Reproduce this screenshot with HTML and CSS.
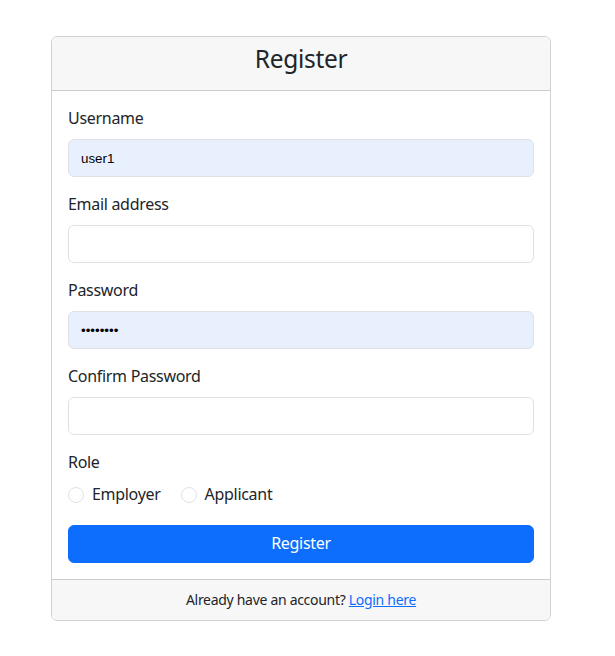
FILE: index.html
```html
<!DOCTYPE html>
<html lang="en">
<head>
<meta charset="utf-8">
<title>Register</title>
<link rel="stylesheet" href="styles.css">
</head>
<body>
<div class="container">
  <div class="card">
    <div class="card-header">
      <h3 class="title">Register</h3>
    </div>
    <div class="card-body">
      <form class="form">
        <div class="field">
          <label class="label" for="username">Username</label>
          <input class="control autofill" id="username" type="text" value="user1">
        </div>
        <div class="field">
          <label class="label" for="email">Email address</label>
          <input class="control" id="email" type="email">
        </div>
        <div class="field">
          <label class="label" for="password">Password</label>
          <input class="control autofill" id="password" type="password" value="password">
        </div>
        <div class="field">
          <label class="label" for="confirm">Confirm Password</label>
          <input class="control" id="confirm" type="password">
        </div>
        <div class="field">
          <div class="label">Role</div>
          <div class="radios">
            <label class="check"><span class="radio"></span><span class="check-text">Employer</span></label>
            <label class="check"><span class="radio"></span><span class="check-text">Applicant</span></label>
          </div>
        </div>
        <button class="btn" type="button">Register</button>
      </form>
    </div>
    <div class="card-footer">
      Already have an account? <a class="link" href="#">Login here</a>
    </div>
  </div>
</div>
</body>
</html>
```

FILE: styles.css
```css
* { box-sizing: border-box; }
html, body { margin: 0; padding: 0; background: #fff; }
body {
  font-family: "Noto Sans", "Open Sans", sans-serif;
  font-size: 16px;
  line-height: 24px;
  letter-spacing: -0.3px;
  color: #212529;
}
.container {
  padding: 36px 51px 0 51px;
}
.card {
  width: 500px;
  border: 1px solid rgba(0,0,0,0.175);
  border-radius: 6px;
  overflow: hidden;
}
.card-header {
  background: #f7f7f7;
  border-bottom: 1px solid rgba(0,0,0,0.175);
  padding: 7px 16px 9px;
  height: 54px;
}
.title {
  margin: 0;
  text-align: center;
  font-weight: 400;
  font-size: 24.5px;
  line-height: 29px;
  color: #212529;
}
.card-body {
  padding: 16px;
}
.form { display: flex; flex-direction: column; margin: 0; }
.field { display: flex; flex-direction: column; margin-bottom: 16px; }
.label {
  display: block;
  margin-top: -1px;
  padding-bottom: 1px;
  margin-bottom: 8px;
  line-height: 24px;
}
.control {
  display: block;
  width: 100%;
  height: 38px;
  padding: 6px 12px;
  border: 1px solid #dee2e6;
  border-radius: 6px;
  background: #fff;
  font-family: "Liberation Sans", Arial, sans-serif;
  font-size: 13.33px;
  letter-spacing: 0;
  color: #000;
  outline: none;
}
.control.autofill { background: #e8f0fe; }
.radios { display: flex; gap: 20px; height: 24px; margin-bottom: 2px; }
.check { display: flex; align-items: center; gap: 8px; }
.check-text { line-height: 22px; padding-bottom: 2px; }
.radio {
  width: 16px; height: 16px;
  border: 1px solid #dee2e6;
  border-radius: 50%;
  background: #fff;
  flex: none;
}
.btn {
  width: 100%;
  height: 38px;
  background: #0d6efd;
  color: #fff;
  border: 1px solid #0d6efd;
  border-radius: 6px;
  font-family: inherit;
  font-size: 16px;
  letter-spacing: -0.3px;
  line-height: 22px;
  padding: 5px 12px 8px;
}
.card-footer {
  background: #f7f7f7;
  border-top: 1px solid rgba(0,0,0,0.175);
  padding: 8px 16px;
  text-align: center;
  font-size: 14px;
  line-height: 24px;
}
.link { color: #0d6efd; text-decoration: underline; }
```
